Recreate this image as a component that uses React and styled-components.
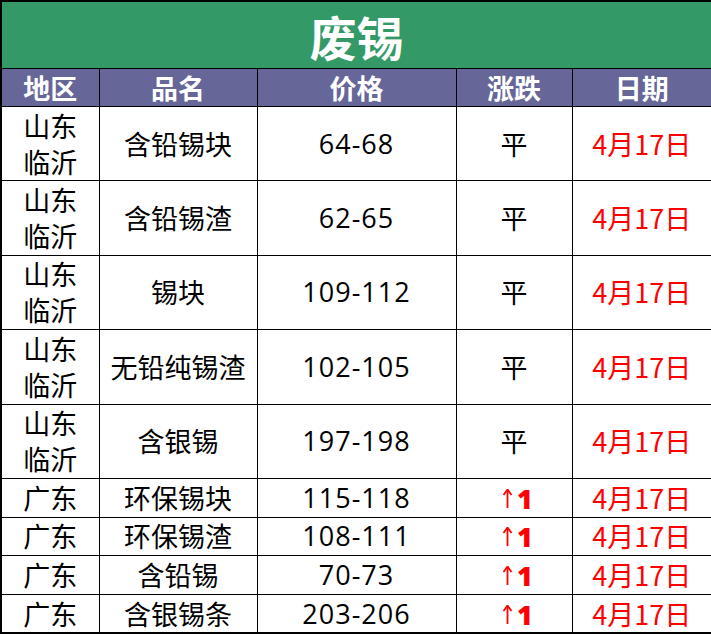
import styled, { createGlobalStyle } from "styled-components";

const Global = createGlobalStyle`
  html, body { margin: 0; padding: 0; background: #fff; }
  body { font-family: "Noto Sans CJK SC", "Noto Sans", sans-serif; }
`

const Sheet = styled.table`
  width: 711px;
  border-collapse: collapse;
  table-layout: fixed;
  border: 2px solid #000;
  td, th { border: 1.5px solid #000; padding: 0; text-align: center; }
`

const Title = styled.th`
  height: 66px;
  background: #339966;
  color: #fff;
  font-size: 47px;
  font-weight: 700;
  line-height: 1;
`

const Head = styled.th`
  height: 37px;
  background: #666699;
  color: #fff;
  font-size: 27px;
  font-weight: 700;
  line-height: 1;
`

const Cell = styled.td`
  height: ${p => (p.$tall ? "73.4px" : "37.6px")};
  font-size: 27px;
  line-height: ${p => (p.$tall ? "36px" : "30px")};
  color: ${p => (p.$red ? "#ff0000" : "#000")};
  letter-spacing: ${p => (p.$num ? "1px" : "0")};
  font-family: ${p => (p.$num ? '"Open Sans", "Noto Sans CJK SC", sans-serif' : '"Noto Sans CJK SC", sans-serif')};
`

const Up = styled.span`
  display: inline-flex;
  align-items: center;
  gap: 5px;
  color: #ff0000;
  font-size: 27px;
  padding-left: 8px;
  svg { display: block; margin-top: -1px; }
  b { font-weight: 800; font-family: "Open Sans", sans-serif; }
`

const Arrow = () => (
  <svg width="9" height="19" viewBox="0 0 9 19">
    <path d="M4.5 1 L4.5 19" stroke="#ff0000" strokeWidth="1.8" />
    <path d="M0.5 6 L4.5 0.5 L8.5 6" stroke="#ff0000" strokeWidth="1.8" fill="none" />
  </svg>
)

const rows = [
  ["山东\n临沂", "含铅锡块", "64-68", "平"],
  ["山东\n临沂", "含铅锡渣", "62-65", "平"],
  ["山东\n临沂", "锡块", "109-112", "平"],
  ["山东\n临沂", "无铅纯锡渣", "102-105", "平"],
  ["山东\n临沂", "含银锡", "197-198", "平"],
  ["广东", "环保锡块", "115-118", "up"],
  ["广东", "环保锡渣", "108-111", "up"],
  ["广东", "含铅锡", "70-73", "up"],
  ["广东", "含银锡条", "203-206", "up"],
]

export default function App() {
  return (
    <>
      <Global />
      <Sheet>
        <colgroup>
          <col style={{ width: 98 }} />
          <col style={{ width: 158 }} />
          <col style={{ width: 199 }} />
          <col style={{ width: 116 }} />
          <col style={{ width: 140 }} />
        </colgroup>
        <thead>
          <tr><Title colSpan={5}>废锡</Title></tr>
          <tr>
            <Head>地区</Head>
            <Head>品名</Head>
            <Head>价格</Head>
            <Head>涨跌</Head>
            <Head>日期</Head>
          </tr>
        </thead>
        <tbody>
          {rows.map((r, i) => {
            const tall = r[0].includes("\n")
            return (
              <tr key={i}>
                <Cell $tall={tall}>
                  {r[0].split("\n").map((t, j) => <div key={j}>{t}</div>)}
                </Cell>
                <Cell $tall={tall}>{r[1]}</Cell>
                <Cell $tall={tall} $num>{r[2]}</Cell>
                <Cell $tall={tall}>
                  {r[3] === "up" ? <Up><Arrow /><b>1</b></Up> : r[3]}
                </Cell>
                <Cell $tall={tall} $red>4月17日</Cell>
              </tr>
            )
          })}
        </tbody>
      </Sheet>
    </>
  )
}
